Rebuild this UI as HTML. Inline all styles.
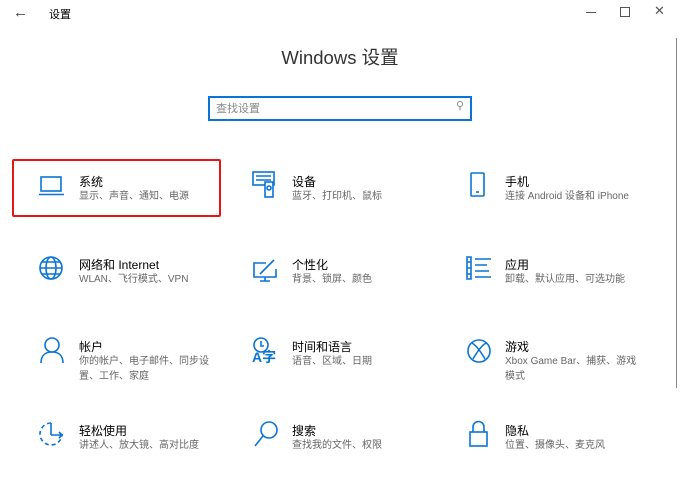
<!DOCTYPE html>
<html><head><meta charset="utf-8"><style>
body{margin:0;width:680px;height:477px;background:#fff;font-family:"Liberation Sans","Noto Sans CJK SC",sans-serif;position:relative;overflow:hidden;color:#000}
.a{position:absolute}
.t{font-size:12px;color:#000;line-height:16px}
.s{font-size:10px;color:#666;line-height:16px}
svg{position:absolute;fill:none;stroke:#0a74d6;stroke-width:1.6}
</style></head><body>
<div class="a" style="left:13px;top:4px;font-size:15px;color:#333">←</div>
<div class="a" style="left:49px;top:6px;font-size:11px">设置</div>
<div class="a" style="left:586px;top:12px;width:10px;height:1px;background:#555"></div>
<div class="a" style="left:620px;top:7px;width:8px;height:8px;border:1px solid #555"></div>
<div class="a" style="left:654px;top:3px;font-size:13px;color:#555">✕</div>
<div class="a" style="left:676px;top:38px;width:1px;height:350px;background:#888"></div>
<div class="a" style="left:0;width:680px;top:46px;text-align:center;font-size:18.5px;color:#333;line-height:24px">Windows 设置</div>
<div class="a" style="left:208px;top:96px;width:260px;height:21px;border:2px solid #0a74d6"></div>
<div class="a" style="left:216px;top:100px;font-size:11px;color:#888">查找设置</div>
<div class="a" style="left:456px;top:99px;font-size:11px;color:#888">⚲</div>
<div class="a" style="left:12px;top:159px;width:205px;height:54px;border:2px solid #e81515;border-radius:2px"></div>

<svg style="left:38px;top:176px" width="27" height="21"><rect x="3" y="1" width="20" height="14"/><path d="M1 18.5h25"/></svg>
<div class="a t" style="left:79px;top:174px">系统</div><div class="a s" style="left:79px;top:189px">显示、声音、通知、电源</div>

<svg style="left:252px;top:171px" width="26" height="28"><rect x="1" y="1" width="21" height="13"/><path d="M4 5h15M4 9h15"/><rect x="13" y="11" width="8" height="15" fill="#fff"/><circle cx="17" cy="17" r="2"/></svg>
<div class="a t" style="left:292px;top:174px">设备</div><div class="a s" style="left:292px;top:189px">蓝牙、打印机、鼠标</div>

<svg style="left:470px;top:172px" width="16" height="26"><rect x="1" y="1" width="13" height="23" rx="1"/><path d="M6 20h3"/></svg>
<div class="a t" style="left:505px;top:174px">手机</div><div class="a s" style="left:505px;top:189px">连接 Android 设备和 iPhone</div>

<svg style="left:38px;top:255px" width="26" height="26"><circle cx="13" cy="13" r="11"/><ellipse cx="13" cy="13" rx="5" ry="11"/><path d="M2 13h22M4 7h18M4 19h18"/></svg>
<div class="a t" style="left:79px;top:257px">网络和 Internet</div><div class="a s" style="left:79px;top:272px">WLAN、飞行模式、VPN</div>

<svg style="left:252px;top:258px" width="26" height="26"><path d="M14 5H2v14h22v-8M13 19v4M8 23h10M8 16l14-14"/></svg>
<div class="a t" style="left:292px;top:257px">个性化</div><div class="a s" style="left:292px;top:272px">背景、锁屏、颜色</div>

<svg style="left:465px;top:255px" width="28" height="26"><path d="M2 2h4v22H2zM2 7h4M2 13h4M2 19h4M10 4h16M10 10h12M10 16h14M10 22h16"/></svg>
<div class="a t" style="left:505px;top:257px">应用</div><div class="a s" style="left:505px;top:272px">卸载、默认应用、可选功能</div>

<svg style="left:40px;top:337px" width="24" height="27"><circle cx="12" cy="8" r="7"/><path d="M1 26c0-8 5-11 11-11s11 3 11 11"/></svg>
<div class="a t" style="left:79px;top:339px">帐户</div><div class="a s" style="left:79px;top:354px;width:140px;line-height:15px">你的帐户、电子邮件、同步设置、工作、家庭</div>

<svg style="left:252px;top:337px" width="26" height="28"><circle cx="9" cy="8" r="7"/><path d="M9 4v5h3"/></svg>
<div class="a" style="left:252px;top:347px;font-size:14px;color:#0a74d6;font-weight:bold">A字</div>
<div class="a t" style="left:292px;top:339px">时间和语言</div><div class="a s" style="left:292px;top:354px">语音、区域、日期</div>

<svg style="left:466px;top:338px" width="26" height="26"><circle cx="13" cy="13" r="11"/><path d="M6 5c5 3 9 9 13 16M20 5C15 8 11 14 7 21"/></svg>
<div class="a t" style="left:505px;top:339px">游戏</div><div class="a s" style="left:505px;top:354px;width:135px;line-height:15px">Xbox Game Bar、捕获、游戏模式</div>

<svg style="left:38px;top:421px" width="28" height="26"><path d="M13 2a11 11 0 1 0 11 11" stroke-dasharray="4 3"/><path d="M13 2v12M13 14h12M21 11l3 3-3 3"/></svg>
<div class="a t" style="left:79px;top:423px">轻松使用</div><div class="a s" style="left:79px;top:438px">讲述人、放大镜、高对比度</div>

<svg style="left:253px;top:420px" width="26" height="28"><circle cx="16" cy="10" r="8"/><path d="M10 16L2 26"/></svg>
<div class="a t" style="left:292px;top:423px">搜索</div><div class="a s" style="left:292px;top:438px">查找我的文件、权限</div>

<svg style="left:469px;top:420px" width="20" height="28"><rect x="1" y="12" width="17" height="14"/><path d="M4 12V7a5.5 5.5 0 0 1 11 0v5"/></svg>
<div class="a t" style="left:505px;top:423px">隐私</div><div class="a s" style="left:505px;top:438px">位置、摄像头、麦克风</div>
</body></html>
